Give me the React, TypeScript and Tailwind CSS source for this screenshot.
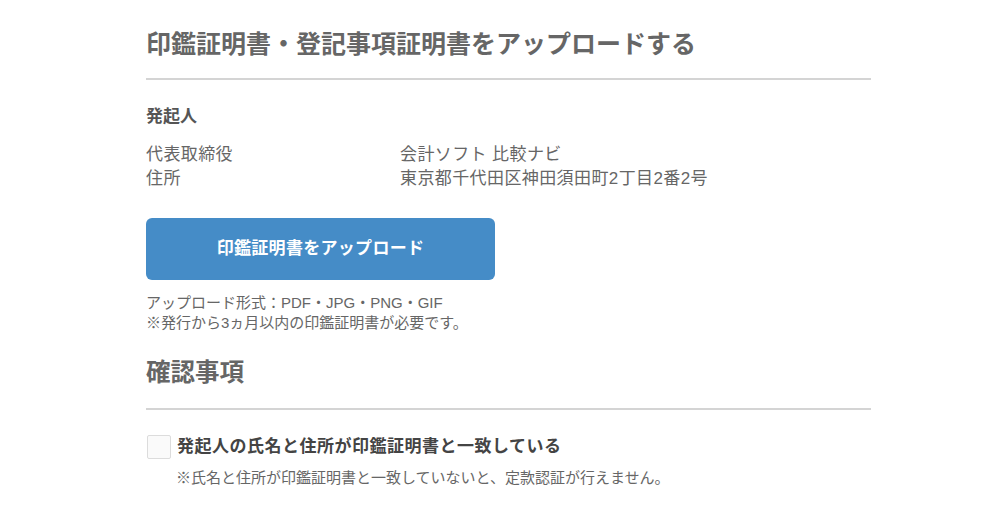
import React from "react";

export default function App() {
  const font = { fontFamily: '"Liberation Sans", "Noto Sans CJK JP", sans-serif' };
  return (
    <div className="min-h-[525px] w-full bg-white text-[#666]" style={font}>
      <div className="ml-[146px] w-[725px]">
        <div className="border-b-2 border-[#d4d4d4] pt-[26px] pb-[16px]">
          <h1 className="text-[25px] font-bold leading-[36px] text-[#666]">
            印鑑証明書・登記事項証明書をアップロードする
          </h1>
        </div>

        <div className="mt-[25px] text-[17px] font-bold leading-[24px] text-[#555]">発起人</div>

        <div className="mt-[14px] grid grid-cols-[254px_1fr] text-[17px] leading-[24px] tracking-[0.4px] text-[#666]">
          <div>代表取締役</div>
          <div>会計ソフト 比較ナビ</div>
          <div>住所</div>
          <div>東京都千代田区神田須田町2丁目2番2号</div>
        </div>

        <button className="mt-[27px] flex h-[62px] w-[349px] items-center justify-center rounded-[6px] bg-[#458cc7] text-[17px] font-bold tracking-[0.3px] text-white">
          印鑑証明書をアップロード
        </button>

        <div className="mt-[13px] text-[15px] leading-[20px] text-[#666]">
          <div>アップロード形式：PDF・JPG・PNG・GIF</div>
          <div>※発行から3ヵ月以内の印鑑証明書が必要です。</div>
        </div>

        <div className="mt-[22px] border-b-2 border-[#d4d4d4] pb-[17px]">
          <h2 className="text-[24.5px] font-bold leading-[36px] text-[#666]">確認事項</h2>
        </div>

        <div className="mt-[25px] flex items-center gap-[6px]">
          <div className="ml-[1px] h-[24px] w-[24px] rounded-[2px] border border-[#dcdcdc] bg-[#fafafa]" />
          <div className="text-[17px] font-bold leading-[24px] tracking-[0.5px] text-[#444]">
            発起人の氏名と住所が印鑑証明書と一致している
          </div>
        </div>
        <div className="ml-[30px] mt-[9px] text-[15px] leading-[20px] text-[#666]">
          ※氏名と住所が印鑑証明書と一致していないと、定款認証が行えません。
        </div>
      </div>
    </div>
  );
}
